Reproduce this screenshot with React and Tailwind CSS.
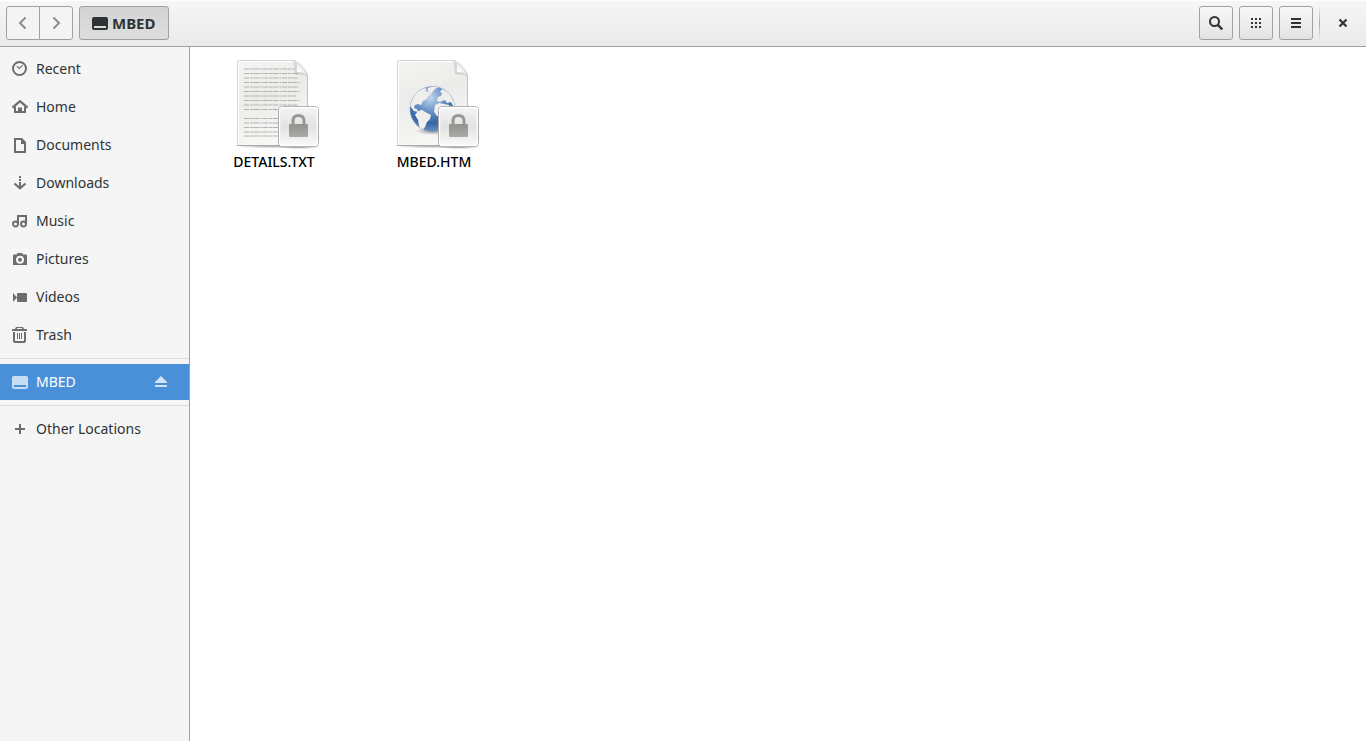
import React from 'react';

const Icon = ({ children, className = '' }) => (
  <svg viewBox="0 0 16 16" width="16" height="16" fill="currentColor" className={`shrink-0 ${className}`} aria-hidden="true">
    {children}
  </svg>
);

const icons = {
  recent: (
    <>
      <circle cx="7.5" cy="7.5" r="6.5" fill="none" stroke="currentColor" strokeWidth="2" />
      <path d="M4.8 5.2 7.2 7.4 10.8 4.2" fill="none" stroke="currentColor" strokeWidth="1.1" />
    </>
  ),
  home: (
    <>
      <path d="M.5 8.6 8 2.2l7.5 6.4" fill="none" stroke="currentColor" strokeWidth="2.2" />
      <path d="M2 7.500h2V12h2V8.500h4V12h2V7.500h2V14H2z" />
    </>
  ),
  documents: <path fillRule="evenodd" d="M2 1h8l4 4v11H2zM4 3v11h8V7H9V3z" />,
  downloads: (
    <>
      <path d="M7 1h2v2H7zM7 4h2v2H7zM7 7h2v5H7z" />
      <path d="M2.500 8.500 8 13.300l5.500-4.800" fill="none" stroke="currentColor" strokeWidth="2.200" />
    </>
  ),
  music: (
    <>
      <circle cx="3.500" cy="11" r="2.500" fill="none" stroke="currentColor" strokeWidth="1.900" />
      <circle cx="11.500" cy="11" r="2.500" fill="none" stroke="currentColor" strokeWidth="1.900" />
      <path d="M5 2h10v9h-2V4H7v7H5z" />
    </>
  ),
  pictures: (
    <path fillRule="evenodd" d="M5.500 2h4.500l1 1.500h3q1 0 1 1V14H1V4.500q0-1 1-1h3zM8 4.800a4 4 0 1 0 0 8 4 4 0 0 0 0-8zm0 2a2 2 0 1 1 0 4 2 2 0 0 1 0-4z" />
  ),
  videos: <path d="M6 4h8q1 0 1 1v7q0 1-1 1H6q-1 0-1-1V5q0-1 1-1zM1 4l4 4.500L1 13z" />,
  trash: (
    <>
      <path fillRule="evenodd" d="M4 0h7l1 2h3v2H0V2h3zM5 1v1h5V1z" />
      <path d="M1 5h2v9h9V5h2v9q0 2-2 2H3q-2 0-2-2zM5 6h1v6H5zM7 6h1v6H7zM9 6h1v6H9z" />
    </>
  ),
  drive: <path fillRule="evenodd" d="M2 2h12q2 0 2 2v9q0 2-2 2H2q-2 0-2-2V4q0-2 2-2zM2 11v2h12v-2z" />,
  eject: <path d="M8 2 14 8v1H2V8zM2 11h12v2H2z" />,
  plus: <path d="M7 3h2v4h4v2H9v4H7V9H3V7h4z" />,
  back: <path d="M10.500 2.500 5 8l5.500 5.500" fill="none" stroke="currentColor" strokeWidth="2" />,
  forward: <path d="M5.500 2.500 11 8l-5.500 5.500" fill="none" stroke="currentColor" strokeWidth="2" />,
  search: (
    <>
      <circle cx="6.500" cy="6.500" r="4.500" fill="none" stroke="currentColor" strokeWidth="2" />
      <path d="m9.800 9.800 4.500 4.500" stroke="currentColor" strokeWidth="2.400" />
    </>
  ),
  grid: <path d="M3 3h2v2H3zM7 3h2v2H7zM11 3h2v2h-2zM3 7h2v2H3zM7 7h2v2H7zM11 7h2v2h-2zM3 11h2v2H3zM7 11h2v2H7zM11 11h2v2h-2z" />,
  menu: <path d="M3 3h10v2H3zM3 7h10v2H3zM3 11h10v2H3z" />,
  close: <path d="m4.500 4.500 7 7m0-7-7 7" stroke="currentColor" strokeWidth="2.200" />,
};

const places = [
  { name: 'Recent', icon: 'recent' },
  { name: 'Home', icon: 'home' },
  { name: 'Documents', icon: 'documents' },
  { name: 'Downloads', icon: 'downloads' },
  { name: 'Music', icon: 'music' },
  { name: 'Pictures', icon: 'pictures' },
  { name: 'Videos', icon: 'videos' },
  { name: 'Trash', icon: 'trash' },
];

const files = [
  { name: 'DETAILS.TXT', kind: 'text' },
  { name: 'MBED.HTM', kind: 'html' },
];

const textLines = [
  [14, 51], [18.5, 55], [23, 54], [27.5, 56], [32, 55], [36.5, 56], [41, 52], [45.5, 56], [50, 54], [54.5, 55],
  [63.5, 54], [68, 55], [72.500, 53], [77, 55], [81, 54],
];

const Sheet = ({ kind }) => (
  <svg viewBox="0 0 96 96" width="96" height="96" aria-hidden="true">
    <defs>
      <linearGradient id={`paper-${kind}`} x1="0" y1="0" x2="0.3" y2="1">
        <stop offset="0" stopColor="#f4f4f3" />
        <stop offset="0.5" stopColor="#ebebe9" />
        <stop offset="1" stopColor="#f7f7f6" />
      </linearGradient>
      <linearGradient id={`fold-${kind}`} x1="0.1" y1="0.9" x2="0.8" y2="0.2">
        <stop offset="0" stopColor="#d2d2d0" />
        <stop offset="0.35" stopColor="#ffffff" />
        <stop offset="1" stopColor="#d8d8d6" />
      </linearGradient>
      <radialGradient id={`sea-${kind}`} cx="0.45" cy="0.25" r="0.75">
        <stop offset="0" stopColor="#c3d6ec" />
        <stop offset="0.4" stopColor="#6a93c8" />
        <stop offset="0.75" stopColor="#3465a4" />
        <stop offset="1" stopColor="#6d8fbf" />
      </radialGradient>
      <linearGradient id={`badge-${kind}`} x1="0" y1="0" x2="0" y2="1">
        <stop offset="0" stopColor="#f5f5f5" />
        <stop offset="0.5" stopColor="#e3e3e3" />
        <stop offset="1" stopColor="#fafafa" />
      </linearGradient>
      <linearGradient id={`lock-${kind}`} x1="0" y1="0" x2="0" y2="1">
        <stop offset="0" stopColor="#92938f" />
        <stop offset="1" stopColor="#aaaba7" />
      </linearGradient>
      <radialGradient id={`shade-${kind}`}>
        <stop offset="0" stopColor="#000" stopOpacity="0.4" />
        <stop offset="1" stopColor="#000" stopOpacity="0" />
      </radialGradient>
      <clipPath id={`globe-${kind}`}>
        <circle cx="46.500" cy="54" r="22.500" />
      </clipPath>
    </defs>

    <ellipse cx="46" cy="90.500" rx="40" ry="3" fill={`url(#shade-${kind})`} />
    <path d="M12.500 5.500H68q4 1 8 6.500 5.500 5 5.500 9v69.500h-70V6.500q0-1 1-1z" fill={`url(#paper-${kind})`} stroke="#d4d4d2" />
    <path d="M11.500 90.500h70" stroke="#a9a9a7" />
    <path d="M81.500 20v70" stroke="#c2c2c0" />
    <path d="M12.500 89.500v-83H68" fill="none" stroke="#fff" />

    {kind === 'text' &&
      textLines.map(([y, width]) => (
        <path key={y} d={`M18 ${y}h${width}`} stroke="#b2b2b0" strokeWidth="1" strokeDasharray="5 .8 3 .6 6 1 2 .7" />
      ))}

    {kind === 'html' && (
      <>
        <ellipse cx="47" cy="76" rx="18" ry="4" fill={`url(#shade-${kind})`} />
        <circle cx="46.500" cy="54" r="22.500" fill={`url(#sea-${kind})`} stroke="#7a94ba" strokeWidth="0.600" />
        <g clipPath={`url(#globe-${kind})`} fill="#efefed">
          {/* North America */}
          <path d="M24 49q3-9 8-13l6-3 3 1-2 2 4 1 2 3-3 1-1 3-4 2-2 4-3-1-3 1-1 3 3 1 1 3-4-1-4-5z" />
          <path d="M42 33l6-2 4 1-4 3-3 4-3-3z" />
          {/* South America */}
          <path d="M32 56l4-1 5 3 4 2-1 4-3 3-2 5-3 4-3-5-1-6-3-5z" />
          {/* Europe and Africa */}
          <path d="M54 37l2-3 6 3 5 6 3 9-3-1-2-4-4 1-2-3-3 1-2 1-3-1 1-4 3-1 1-3z" />
          <path d="M49 50l4-2 5 1 5 1 3 6 3 1-4 6-2 7-4 2-3-7v-4l-5 0-3-4z" />
        </g>
      </>
    )}

    {/* folded corner */}
    <path d="M68 4.500h15v17h-1q0-4-5.500-9.500T68 5.500z" fill="#fff" />
    <path d="M82 23q-4-4-12-3-2-7-3-14z" fill="#888" opacity="0.200" />
    <path d="M68 5.500q4 3 1.500 12.500 8-1.500 12 3-1-5-5.500-9.500T68 5.500z" fill={`url(#fold-${kind})`} stroke="#c2c2c0" strokeWidth="0.700" />

    {/* read-only emblem */}
    <ellipse cx="73" cy="92" rx="22" ry="2" fill={`url(#shade-${kind})`} />
    <rect x="52.500" y="51.500" width="40" height="40" rx="4" fill={`url(#badge-${kind})`} stroke="#989898" />
    <rect x="53.500" y="52.500" width="38" height="38" rx="3" fill="none" stroke="#fff" strokeWidth="1.400" />
    <path d="M67 70v-4q0-5.500 5.500-5.500T78 66v4" fill="none" stroke="#989996" strokeWidth="3" />
    <rect x="63" y="69" width="19" height="13" rx="1" fill={`url(#lock-${kind})`} />
  </svg>
);

const HeaderButton = ({ label, icon, className = '' }) => (
  <button
    aria-label={label}
    className={`flex h-[34px] w-[34px] items-center justify-center border border-[#a1a1a1] bg-linear-to-b ${className}`}
  >
    <Icon>{icons[icon]}</Icon>
  </button>
);

const Place = ({ name, icon }) => (
  <li>
    <a href="#" className="flex h-9 items-center gap-2 px-3">
      <Icon className="text-[#6b6e6f]">{icons[icon]}</Icon>
      <span>{name}</span>
    </a>
  </li>
);

const App = () => {
  return (
    <div className="flex min-h-screen flex-col bg-white font-['Noto_Sans',sans-serif] text-[14px] leading-5 text-[#2e3436]">
      <header className="flex h-[47px] items-center justify-between border-t border-b border-t-white border-b-[#a1a1a1] bg-linear-to-b from-[#f6f6f6] to-[#eaeaea] px-1.5 pb-0.5">
        <div className="flex gap-1.5">
          <nav className="flex text-[#8b8e8f]" aria-label="History">
            <HeaderButton label="Back" icon="back" className="rounded-l-[3px] from-[#f4f4f4] to-[#f4f4f4]" />
            <HeaderButton label="Forward" icon="forward" className="-ml-px rounded-r-[3px] from-[#f4f4f4] to-[#f4f4f4]" />
          </nav>
          <button className="flex h-[34px] items-center gap-1 rounded-[3px] border border-[#a1a1a1] bg-linear-to-b from-[#d3d3d3] to-[#dedede] px-3 text-[15px] font-bold">
            <Icon>{icons.drive}</Icon>
            MBED
          </button>
        </div>
        <div className="flex items-center gap-1.5">
          <HeaderButton label="Search" icon="search" className="rounded-[3px] from-[#f8f8f8] to-[#e3e3e3]" />
          <HeaderButton label="View as grid" icon="grid" className="rounded-[3px] from-[#f8f8f8] to-[#e3e3e3]" />
          <HeaderButton label="Menu" icon="menu" className="rounded-[3px] from-[#f8f8f8] to-[#e3e3e3]" />
          <div className="h-[34px] w-px bg-linear-to-b from-transparent via-[#a8a8a8] to-transparent" />
          <button aria-label="Close" className="flex h-[34px] w-[34px] items-center justify-center">
            <Icon>{icons.close}</Icon>
          </button>
        </div>
      </header>

      <div className="flex flex-1">
        <aside className="w-[190px] shrink-0 border-r border-[#a1a1a1] bg-[#f5f5f5] pt-1">
          <ul className="flex flex-col gap-0.5">
            {places.map((p) => (
              <Place key={p.name} name={p.name} icon={p.icon} />
            ))}
          </ul>
          <hr className="my-[5px] border-[#dcdcdc]" />
          <div className="flex h-9 items-center justify-between bg-[#4a90d9] pr-5 pl-3 text-white">
            <a href="#" className="flex items-center gap-2">
              <Icon className="text-[#c8ddf4]">{icons.drive}</Icon>
              MBED
            </a>
            <button aria-label="Eject MBED" className="text-[#d2e3f6]">
              <Icon>{icons.eject}</Icon>
            </button>
          </div>
          <hr className="my-[5px] border-[#dcdcdc]" />
          <ul>
            <Place name="Other Locations" icon="plus" />
          </ul>
        </aside>

        <main className="flex flex-1 flex-wrap content-start px-1 pt-2 leading-[22px] font-medium text-black">
          {files.map((f) => (
            <button key={f.name} className="flex w-40 flex-col items-center">
              <Sheet kind={f.kind} />
              <span>{f.name}</span>
            </button>
          ))}
        </main>
      </div>
    </div>
  );
};

export default App;
